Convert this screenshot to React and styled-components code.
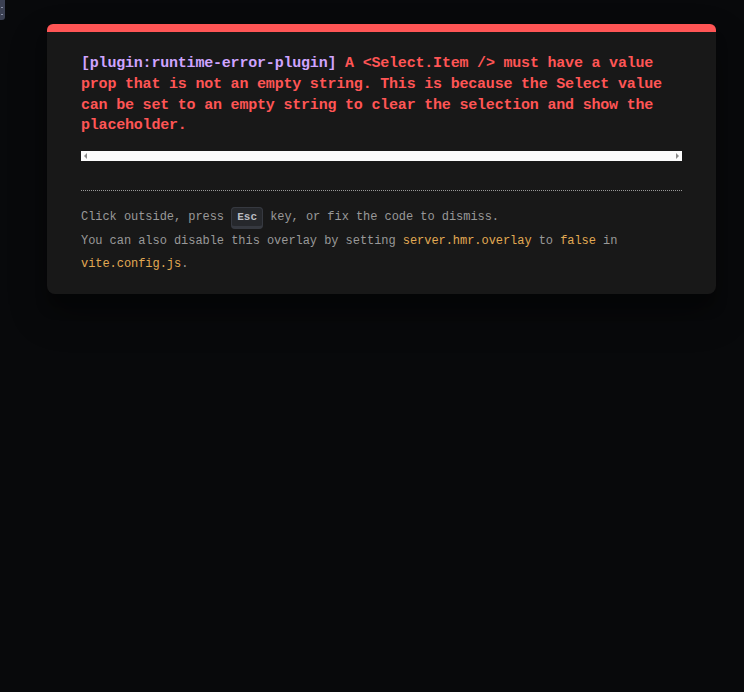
import styled, { createGlobalStyle } from "styled-components";

const GlobalStyle = createGlobalStyle`
  html, body {
    margin: 0;
    padding: 0;
    background: #08090b;
  }
  body {
    min-height: 692px;
    overflow: hidden;
  }
`;

const mono = `"Liberation Mono", "DejaVu Sans Mono", monospace`;

const Backdrop = styled.div`
  position: relative;
  min-height: 692px;
  padding-top: 24px;
  box-sizing: border-box;
`;

const Peek = styled.div`
  position: absolute;
  top: 0;
  left: 0;
  width: 5px;
  height: 20px;
  background: #3b4052;
  border-bottom-right-radius: 3px;
  &::after {
    content: "";
    position: absolute;
    left: 1px;
    top: 7px;
    width: 2px;
    height: 6px;
    border-top: 1px solid #8a90a6;
    border-bottom: 1px solid #8a90a6;
  }
`;

const Window = styled.div`
  width: 669px;
  margin-left: 47px;
  box-sizing: border-box;
  padding: 22px 34px 17px;
  background: #181818;
  color: #d8d8d8;
  border-top: 8px solid #ff5555;
  border-radius: 6px 6px 8px 8px;
  box-shadow: 0 19px 38px rgba(0, 0, 0, 0.3), 0 15px 12px rgba(0, 0, 0, 0.22);
  font-family: ${mono};
`;

const Message = styled.pre`
  margin: 0 0 14px;
  font-family: ${mono};
  font-size: 15px;
  letter-spacing: -0.2px;
  line-height: 20.8px;
  font-weight: 700;
  white-space: pre-wrap;
`;

const Plugin = styled.span`
  color: #cfa4ff;
`;

const Body = styled.span`
  color: #ff5555;
`;

const ScrollTrack = styled.div`
  height: 10px;
  background: #fcfcfc;
  display: flex;
  align-items: center;
  justify-content: space-between;
  padding: 0 3px;
  margin-bottom: 29px;
`;

const Arrow = styled.span`
  width: 0;
  height: 0;
  border-top: 3px solid transparent;
  border-bottom: 3px solid transparent;
  ${(p) =>
    p.$dir === "left"
      ? "border-right: 3px solid #8a8a8a;"
      : "border-left: 3px solid #8a8a8a;"}
`;

const Tip = styled.div`
  border-top: 1px dotted #999;
  padding-top: 15px;
  font-size: 12px;
  letter-spacing: -0.05px;
  line-height: 23.5px;
  color: #999;
`;

const Code = styled.code`
  font-family: ${mono};
  color: #e2aa53;
`;

const Kbd = styled.kbd`
  font-family: ${mono};
  font-size: 11px;
  font-weight: 700;
  line-height: 1.5;
  letter-spacing: 0;
  background: rgb(38, 40, 44);
  color: rgb(186, 188, 194);
  padding: 3px 5px;
  border-radius: 4px;
  border-style: solid;
  border-color: rgb(54, 57, 64);
  border-width: 1px 1px 3px;
`;

export default function App() {
  return (
    <>
      <GlobalStyle />
      <Backdrop>
        <Peek />
        <Window>
          <Message>
            <Plugin>[plugin:runtime-error-plugin]</Plugin>{" "}
            <Body>
              A &lt;Select.Item /&gt; must have a value prop that is not an
              empty string. This is because the Select value can be set to an
              empty string to clear the selection and show the placeholder.
            </Body>
          </Message>
          <ScrollTrack>
            <Arrow $dir="left" />
            <Arrow $dir="right" />
          </ScrollTrack>
          <Tip>
            Click outside, press <Kbd>Esc</Kbd> key, or fix the code to dismiss.
            <br />
            You can also disable this overlay by setting{" "}
            <Code>server.hmr.overlay</Code> to <Code>false</Code> in{" "}
            <Code>vite.config.js</Code>.
          </Tip>
        </Window>
      </Backdrop>
    </>
  );
}
